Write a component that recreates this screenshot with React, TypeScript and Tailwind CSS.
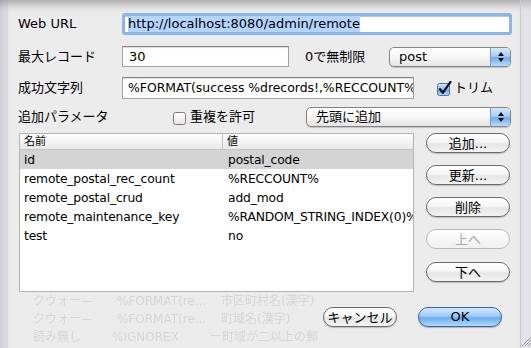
import React from "react";

function Popup({ className, label }: { className: string; label: string }) {
  return (
    <div
      className={
        "flex h-[20px] items-stretch rounded-[5px] border border-[#858585] bg-gradient-to-b from-white via-[#f7f7f7] to-[#e4e4e4] shadow-[0_1px_1px_rgba(0,0,0,0.18)] " +
        className
      }
    >
      <span className="flex-1 truncate pl-[9px] text-[13px] leading-[18px] text-black">{label}</span>
      <span className="flex w-[20px] flex-col items-center justify-center gap-[2px] rounded-r-[4px] border-l border-[#7d97bd] bg-[linear-gradient(to_bottom,#d7e9fb_0%,#a8cdf3_45%,#74adeb_55%,#b9dbf9_100%)]">
        <svg width="6" height="4" viewBox="0 0 6 4">
          <path d="M3 0 L6 4 L0 4 Z" fill="#111" />
        </svg>
        <svg width="6" height="4" viewBox="0 0 6 4">
          <path d="M0 0 L6 0 L3 4 Z" fill="#111" />
        </svg>
      </span>
    </div>
  );
}

function AquaButton({
  className,
  label,
  disabled,
}: {
  className: string;
  label: string;
  disabled?: boolean;
}) {
  return (
    <button
      type="button"
      className={
        "flex h-[20px] items-center justify-center rounded-full border text-[13px] leading-none " +
        (disabled
          ? "border-[#b9b9b9] bg-gradient-to-b from-white to-[#f0f0f0] text-[#a8a8a8] "
          : "border-[#6c6c6c] bg-[linear-gradient(to_bottom,#ffffff_0%,#f6f6f6_45%,#e6e6e6_55%,#f4f4f4_100%)] text-black shadow-[0_1px_1px_rgba(0,0,0,0.2)] ") +
        className
      }
    >
      {label}
    </button>
  );
}

function Check({ checked }: { checked: boolean }) {
  return (
    <svg width="16" height="15" viewBox="0 0 16 15" className="shrink-0">
      <defs>
        <linearGradient id="cbBlue" x1="0" y1="0" x2="0" y2="1">
          <stop offset="0" stopColor="#d3e7fb" />
          <stop offset="0.5" stopColor="#8cc0f1" />
          <stop offset="0.55" stopColor="#6aa9ea" />
          <stop offset="1" stopColor="#b8dafa" />
        </linearGradient>
        <linearGradient id="cbWhite" x1="0" y1="0" x2="0" y2="1">
          <stop offset="0" stopColor="#ffffff" />
          <stop offset="1" stopColor="#e6e6e6" />
        </linearGradient>
      </defs>
      <rect
        x="0.5"
        y="2.5"
        width="12"
        height="12"
        rx="2"
        fill={checked ? "url(#cbBlue)" : "url(#cbWhite)"}
        stroke={checked ? "#4f71a6" : "#7a7a7a"}
      />
      {checked && (
        <path d="M3 8.2 L5.8 11.8 L13.5 0.8" fill="none" stroke="#111" strokeWidth="2.2" strokeLinecap="round" strokeLinejoin="round" />
      )}
    </svg>
  );
}

const rows = [
  ["id", "postal_code"],
  ["remote_postal_rec_count", "%RECCOUNT%"],
  ["remote_postal_crud", "add_mod"],
  ["remote_maintenance_key", "%RANDOM_STRING_INDEX(0)%"],
  ["test", "no"],
];

export default function App() {
  return (
    <div className="flex h-[348px] w-[531px] overflow-hidden bg-[#dcdcdf] font-['DejaVu_Sans','Noto_Sans_CJK_JP',sans-serif] text-black">
      <div className="w-[8px] bg-[linear-gradient(to_right,#d3d3d7,#dedee1)] shadow-[inset_0_10px_8px_-6px_rgba(0,0,0,0.25)]" />

      <div className="flex w-[512px] flex-col bg-[#ececec] pl-[10px] shadow-[inset_0_10px_8px_-6px_rgba(0,0,0,0.3)]">
        <div className="mt-[13px] flex h-[22px] items-center">
          <span className="w-[104px] text-[13px]">Web URL</span>
          <div className="flex h-[22px] w-[390px] items-center rounded-[3px] border-[3px] border-[#8db5e5] bg-white pl-[3px] shadow-[inset_0_1px_1px_rgba(0,0,0,0.25)]">
            <span className="bg-[#b5d5ff] py-[1px] text-[13px] leading-[14px]">http://localhost:8080/admin/remote</span>
          </div>
        </div>

        <div className="mt-[11px] flex h-[21px] items-center">
          <span className="w-[104px] text-[13px]">最大レコード</span>
          <div className="flex h-[21px] w-[167px] items-center border border-[#a3a3a3] border-t-[#858585] bg-white pl-[6px] text-[13px] shadow-[inset_0_1px_1px_rgba(0,0,0,0.15)]">
            30
          </div>
          <span className="ml-[16px] w-[84px] text-[13px]">0で無制限</span>
          <Popup className="w-[122px]" label="post" />
        </div>

        <div className="mt-[10px] flex h-[22px] items-center">
          <span className="w-[104px] text-[13px]">成功文字列</span>
          <div className="flex h-[22px] w-[292px] items-center overflow-hidden whitespace-nowrap border border-[#a3a3a3] border-t-[#858585] bg-white pl-[5px] text-[12.4px] shadow-[inset_0_1px_1px_rgba(0,0,0,0.15)]">
            %FORMAT(success %drecords!,%RECCOUNT%)%
          </div>
          <span className="ml-[23px] flex items-center gap-[1px]">
            <Check checked />
            <span className="text-[13px]">トリム</span>
          </span>
        </div>

        <div className="mt-[8px] flex h-[21px] items-center">
          <span className="w-[155px] text-[13px]">追加パラメータ</span>
          <Check checked={false} />
          <span className="ml-[1px] w-[116px] text-[13px]">重複を許可</span>
          <Popup className="w-[205px]" label="先頭に追加" />
        </div>

        <div className="mt-[6px] flex">
          <div className="ml-[1px] h-[159px] w-[395px] overflow-hidden border border-[#b4b4b4] bg-white">
            <div className="flex h-[16px] border-b border-[#c4c4c4] bg-gradient-to-b from-white to-[#e9e9e9] text-[11px] leading-[16px]">
              <span className="w-[203px] border-r border-[#c4c4c4] pl-[4px]">名前</span>
              <span className="pl-[4px]">値</span>
            </div>
            {rows.map(([k, v], i) => (
              <div
                key={k}
                className={
                  "flex h-[19px] items-center whitespace-nowrap pt-[2px] text-[12.3px] tracking-[-0.15px] " +
                  (i === 0 ? "bg-[#d4d4d4]" : "")
                }
              >
                <span className="w-[204px] shrink-0 overflow-hidden pl-[4px]">{k}</span>
                <span className="pl-[4px]">{v}</span>
              </div>
            ))}
          </div>

          <div className="ml-[12px] flex w-[84px] flex-col">
            <AquaButton className="w-[84px]" label="追加..." />
            <AquaButton className="mt-[12px] w-[84px]" label="更新..." />
            <AquaButton className="mt-[12px] w-[84px]" label="削除" />
            <AquaButton className="mt-[12px] w-[84px]" label="上へ" disabled />
            <AquaButton className="mt-[13px] w-[84px]" label="下へ" />
          </div>
        </div>

        <div className="flex flex-1">
          <div className="ml-[15px] flex w-[290px] flex-col text-[12px] leading-[18px] text-[#d6d6d6] blur-[0.7px]">
            <div className="flex">
              <span className="w-[84px]">クウォー—</span>
              <span className="w-[104px]">%FORMAT(re...</span>
              <span>市区町村名(漢字)</span>
            </div>
            <div className="flex">
              <span className="w-[84px]">クウォー—</span>
              <span className="w-[104px]">%FORMAT(re...</span>
              <span>町域名(漢字)</span>
            </div>
            <div className="flex">
              <span className="w-[84px]">読み無し</span>
              <span className="w-[104px]">%IGNOREX</span>
              <span>一町域が二以上の郵便</span>
            </div>
          </div>
          <div className="mt-[15px] flex">
            <AquaButton className="w-[74px]" label="キャンセル" />
            <button
              type="button"
              className="ml-[21px] flex h-[20px] w-[84px] items-center justify-center rounded-full border border-[#3d62a3] bg-[linear-gradient(to_bottom,#d2e8fd_0%,#9fcbf6_45%,#6aaced_55%,#b5dbfb_100%)] text-[13px] shadow-[0_1px_1px_rgba(0,0,0,0.25)]"
            >
              OK
            </button>
          </div>
        </div>
      </div>

      <div className="flex flex-1 flex-col justify-end border-l border-[#c9c9cd] bg-[#e4e4e8] shadow-[inset_0_10px_8px_-6px_rgba(0,0,0,0.2)]">
        <svg width="10" height="12" viewBox="0 0 10 12" className="mb-[1px]">
          <path d="M1 11 L10 2 M4 11 L10 5 M7 11 L10 8" stroke="#9a9a9a" strokeWidth="1" />
        </svg>
      </div>
    </div>
  );
}
